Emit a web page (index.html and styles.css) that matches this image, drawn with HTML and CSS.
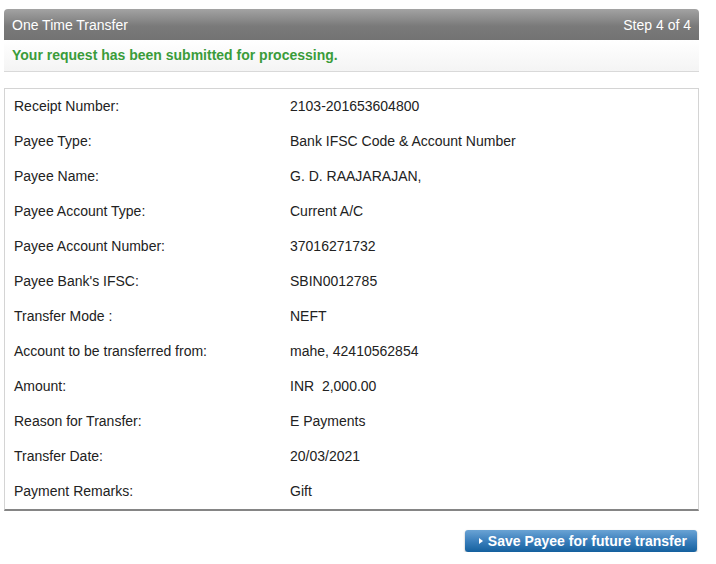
FILE: index.html
```html
<!DOCTYPE html>
<html>
<head>
<meta charset="utf-8">
<link rel="stylesheet" href="styles.css">
</head>
<body>
<div class="page">
  <div class="panel-head">
    <span>One Time Transfer</span>
    <span>Step 4 of 4</span>
  </div>
  <div class="notice">Your request has been submitted for processing.</div>
  <div class="details">
    <div class="row"><div class="label">Receipt Number:</div><div class="value">2103-201653604800</div></div>
    <div class="row"><div class="label">Payee Type:</div><div class="value">Bank IFSC Code &amp; Account Number</div></div>
    <div class="row"><div class="label">Payee Name:</div><div class="value">G. D. RAAJARAJAN,</div></div>
    <div class="row"><div class="label">Payee Account Type:</div><div class="value">Current A/C</div></div>
    <div class="row"><div class="label">Payee Account Number:</div><div class="value">37016271732</div></div>
    <div class="row"><div class="label">Payee Bank's IFSC:</div><div class="value">SBIN0012785</div></div>
    <div class="row"><div class="label">Transfer Mode :</div><div class="value">NEFT</div></div>
    <div class="row"><div class="label">Account to be transferred from:</div><div class="value">mahe, 42410562854</div></div>
    <div class="row"><div class="label">Amount:</div><div class="value">INR&nbsp; 2,000.00</div></div>
    <div class="row"><div class="label">Reason for Transfer:</div><div class="value">E Payments</div></div>
    <div class="row"><div class="label">Transfer Date:</div><div class="value">20/03/2021</div></div>
    <div class="row"><div class="label">Payment Remarks:</div><div class="value">Gift</div></div>
  </div>
  <div class="actions">
    <button class="btn"><span class="arrow"></span>Save Payee for future transfer</button>
  </div>
</div>
</body>
</html>
```
FILE: styles.css
```css
* { box-sizing: border-box; }
html, body { margin: 0; padding: 0; background: #fff; }
body {
  font-family: Arial, "Liberation Sans", sans-serif;
  font-size: 14px;
  color: #222;
}
.page {
  width: 695px;
  margin: 9px 0 0 4px;
}
.panel-head {
  height: 31px;
  display: flex;
  justify-content: space-between;
  align-items: center;
  padding: 0 8px;
  color: #fff;
  background: linear-gradient(#a3a3a3, #7a7a7a 55%, #737373);
  border-radius: 4px 4px 0 0;
}
.notice {
  height: 32px;
  display: flex;
  align-items: center;
  padding: 0 8px 2px;
  color: #3a9c3a;
  font-weight: bold;
  background: linear-gradient(#fff, #f4f4f4);
  border-bottom: 1px solid #d9d9d9;
}
.details {
  margin-top: 16px;
  border: 1px solid #d4d4d4;
  border-bottom: 2px solid #858585;
}
.row {
  display: flex;
  height: 35px;
  align-items: center;
  padding-bottom: 2px;
}
.label { width: 285px; padding-left: 9px; }
.value { flex: 1; }
.actions {
  display: flex;
  justify-content: flex-end;
  padding: 19px 2px 0 0;
}
.btn {
  height: 22px;
  padding: 0 10px 1px 14px;
  border: 0;
  border-radius: 3px;
  font-family: Arial, "Liberation Sans", sans-serif;
  font-size: 14px;
  font-weight: bold;
  color: #fff;
  background: linear-gradient(#6aa3d4, #3b7fbc 50%, #14609e);
  box-shadow: 0 1px 2px rgba(0,0,0,0.35);
  display: flex;
  align-items: center;
}
.arrow {
  width: 0; height: 0;
  border-left: 4px solid #fff;
  border-top: 3.5px solid transparent;
  border-bottom: 3.5px solid transparent;
  margin-right: 5px;
}
```
